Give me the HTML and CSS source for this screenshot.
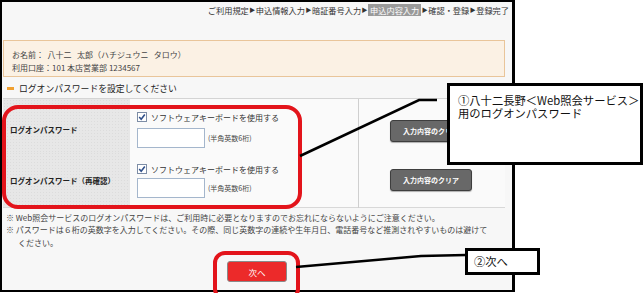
FILE: index.html
```html
<!DOCTYPE html>
<html lang="ja">
<head>
  <meta charset="UTF-8" />
  <title>ログオンパスワード設定</title>
  <meta name="viewport" content="width=device-width, initial-scale=1.0"/>
  <link rel="stylesheet" href="styles.css">
</head>
<body>

  <!-- 申込画面 -->
  <div class="panel">
    <div class="steps">
      <span>ご利用規定</span><span class="arrow">▶</span><span>申込情報入力</span><span class="arrow">▶</span><span>暗証番号入力</span><span class="arrow">▶</span><span class="current">申込内容入力</span><span class="arrow">▶</span><span>確認・登録</span><span class="arrow">▶</span><span>登録完了</span>
    </div>

    <div class="info">
      <p>お名前：&nbsp; 八十二&nbsp;&nbsp; 太郎（ハチジュウニ&nbsp;&nbsp; タロウ）</p>
      <p>利用口座：101 本店営業部 1234567</p>
    </div>

    <h2 class="heading"><span class="bar"></span>ログオンパスワードを設定してください</h2>

    <table class="form">
      <tr class="row-first">
        <th>ログオンパスワード</th>
        <td class="fields">
          <div class="check">
            <svg width="10" height="10" viewBox="0 0 10 10"><rect x="0.5" y="0.5" width="9" height="9" fill="#fff" stroke="#7d8da6"/><path d="M2.2 5 L4.2 7.2 L7.8 2.6" fill="none" stroke="#2f4f8a" stroke-width="1.6"/></svg>
            ソフトウェアキーボードを使用する
          </div>
          <div class="entry"><span class="box"></span><span class="hint">(半角英数6桁)</span></div>
        </td>
        <td class="action"><span class="clear">入力内容のクリア</span></td>
      </tr>
      <tr class="row-second">
        <th>ログオンパスワード（再確認）</th>
        <td class="fields">
          <div class="check">
            <svg width="10" height="10" viewBox="0 0 10 10"><rect x="0.5" y="0.5" width="9" height="9" fill="#fff" stroke="#7d8da6"/><path d="M2.2 5 L4.2 7.2 L7.8 2.6" fill="none" stroke="#2f4f8a" stroke-width="1.6"/></svg>
            ソフトウェアキーボードを使用する
          </div>
          <div class="entry"><span class="box"></span><span class="hint">(半角英数6桁)</span></div>
        </td>
        <td class="action"><span class="clear">入力内容のクリア</span></td>
      </tr>
    </table>

    <ul class="notes">
      <li>※ Web照会サービスのログオンパスワードは、ご利用時に必要となりますのでお忘れにならないようにご注意ください。</li>
      <li>※ パスワードは６桁の英数字を入力してください。その際、同じ英数字の連続や生年月日、電話番号など推測されやすいものは避けてください。</li>
    </ul>

    <div class="submit"><span class="next">次へ</span></div>
  </div>

  <!-- 注記 -->
  <div class="ring ring-form"></div>
  <div class="ring ring-next"></div>

  <svg class="leaders" width="643" height="293" viewBox="0 0 643 293">
    <polyline points="300,156 419,100 437,100" fill="none" stroke="#000" stroke-width="2.5"/>
    <polyline points="296,267 421,256 466,255" fill="none" stroke="#000" stroke-width="2.5"/>
  </svg>

  <div class="callout callout-pass">①八十二長野＜Web照会サービス＞<br>用のログオンパスワード</div>
  <div class="callout callout-next">②次へ</div>

</body>
</html>
```

FILE: styles.css
```css
body, html {
  margin: 0;
  padding: 0;
  background: #fff;
  font-family: "Noto Sans CJK JP", "Noto Sans", sans-serif;
  color: #333;
}

body {
  width: 643px;
  height: 293px;
  overflow: hidden;
}

.panel {
  box-sizing: border-box;
  width: 515px;
  height: 292px;
  border: 2px solid #000;
  border-right-width: 3px;
  background: #f7f7f7;
  padding: 0 7px 0 1px;
}

/* step bar */
.steps {
  display: flex;
  justify-content: flex-end;
  align-items: center;
  height: 14px;
  padding-top: 1px;
  margin-right: -4px;
  font-size: 8.2px;
  line-height: 12px;
  color: #333;
}

.steps .arrow {
  font-size: 6px;
  margin: 0 0.5px;
}

.steps .current {
  background: #9a9a9a;
  color: #fff;
  padding: 0 2px;
}

/* customer info */
.info {
  box-sizing: border-box;
  height: 37px;
  margin-top: 23px;
  padding: 7px 8px 0;
  background: #fbf1e4;
  border: 1px solid #e9c59a;
  font-size: 8px;
  line-height: 13px;
  color: #444;
}

.info p {
  margin: 0;
}

.heading {
  display: flex;
  align-items: center;
  margin: 4px 0 0;
  padding: 0 0 2px 4px;
  height: 15px;
  font-size: 8.8px;
  font-weight: normal;
  color: #222;
  border-bottom: 1px solid #d4d4d4;
}

.heading .bar {
  display: inline-block;
  width: 7px;
  height: 3px;
  background: #f0a030;
  margin-right: 5px;
}

/* form table */
.form {
  width: 100%;
  border-collapse: collapse;
  margin-top: 0;
  border-bottom: 1px solid #d8d8d8;
}

.form th {
  width: 120px;
  background-color: #e7e7e7;
  background-image: radial-gradient(#dcdcdc 0.6px, transparent 0.8px);
  background-size: 3px 3px;
  text-align: left;
  vertical-align: top;
  padding: 0 0 0 7px;
  font-size: 7.5px;
  font-weight: bold;
  line-height: 12px;
  color: #222;
}

.form td {
  vertical-align: top;
  background: #fafafa;
  padding: 0;
}

.form .fields {
  width: 221px;
  padding-left: 7px;
}

.form .action {
  border-left: 1px solid #cfcfcf;
  padding-left: 31px;
}

.row-first { height: 53px; }
.row-first th { padding-top: 25px; }
.row-first .fields { padding-top: 12px; }
.row-first .action { padding-top: 21px; }

.row-second { height: 55px; }
.row-second th { padding-top: 23px; }
.row-second .fields { padding-top: 11px; }
.row-second .entry { margin-top: 3px; }
.row-second .action { padding-top: 17px; }

.check {
  display: flex;
  align-items: center;
  gap: 4px;
  height: 12px;
  font-size: 8px;
  color: #333;
}

.entry {
  display: flex;
  align-items: center;
  margin-top: 5px;
}

.box {
  display: inline-block;
  box-sizing: border-box;
  width: 68px;
  height: 20px;
  background: #fff;
  border: 1px solid #a4b6cc;
}

.hint {
  margin-left: 3px;
  font-size: 7px;
  color: #444;
}

.clear {
  display: flex;
  align-items: center;
  justify-content: center;
  box-sizing: border-box;
  width: 82px;
  height: 22px;
  background: #686868;
  border: 1px solid #3e3e3e;
  border-radius: 3px;
  box-shadow: 0 1px 1px rgba(0, 0, 0, 0.3);
  color: #fff;
  font-size: 7px;
  font-weight: bold;
}

/* notes */
.notes {
  list-style: none;
  margin: 4px 0 0;
  padding: 0 0 0 3px;
  font-size: 8px;
  line-height: 12.5px;
  color: #444;
  width: 486px;
}

.notes li {
  padding-left: 12px;
  text-indent: -12px;
}

.submit {
  display: flex;
  margin-top: 12px;
  padding-left: 224px;
}

.next {
  display: flex;
  align-items: center;
  justify-content: center;
  box-sizing: border-box;
  width: 60px;
  height: 21px;
  background: #ec2a2a;
  border: 1px solid #8a8a8a;
  border-radius: 3px;
  color: #fff;
  font-size: 8.5px;
}

/* annotations */
.ring {
  position: absolute;
  box-sizing: border-box;
  border: 4px solid #e3141b;
}

.ring-form {
  left: 2px;
  top: 105px;
  width: 300px;
  height: 104px;
  border-radius: 16px;
}

.ring-next {
  left: 213px;
  top: 251px;
  width: 87px;
  height: 50px;
  border-radius: 12px;
}

.leaders {
  position: absolute;
  left: 0;
  top: 0;
  pointer-events: none;
}

.callout {
  position: absolute;
  box-sizing: border-box;
  background: #fff;
  border: 3px solid #000;
  color: #111;
  font-size: 11.3px;
  line-height: 13px;
}

.callout-pass {
  left: 447px;
  top: 83px;
  width: 196px;
  height: 82px;
  padding: 8px 0 0 8px;
}

.callout-next {
  left: 465px;
  top: 248px;
  width: 75px;
  height: 27px;
  padding: 4px 0 0 6px;
}
```
